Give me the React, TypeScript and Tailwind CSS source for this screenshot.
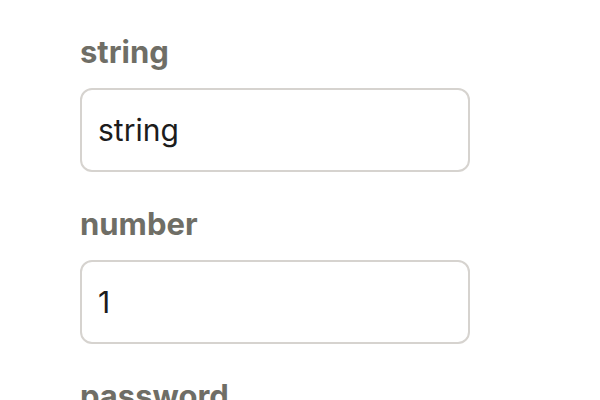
import React from 'react';

const fields = [
  { label: 'string', value: 'string', type: 'text' },
  { label: 'number', value: '1', type: 'text' },
  { label: 'password', value: '', type: 'password' },
];

export default function App() {
  return (
    <div className="min-h-screen bg-white pl-[80px] pt-[30px] font-['Inter',sans-serif]">
      <div className="flex w-[390px] flex-col gap-[30px]">
        {fields.map((f) => (
          <label key={f.label} className="flex flex-col gap-[14px]">
            <span className="text-[31px] font-bold leading-[44px] text-[#6f6e66]">{f.label}</span>
            <input
              type={f.type}
              defaultValue={f.value}
              className="h-[84px] rounded-[12px] border-2 border-[#d6d3cf] bg-white px-[16px] text-[30px] text-[#1c1c1c] outline-none"
            />
          </label>
        ))}
      </div>
    </div>
  );
}
